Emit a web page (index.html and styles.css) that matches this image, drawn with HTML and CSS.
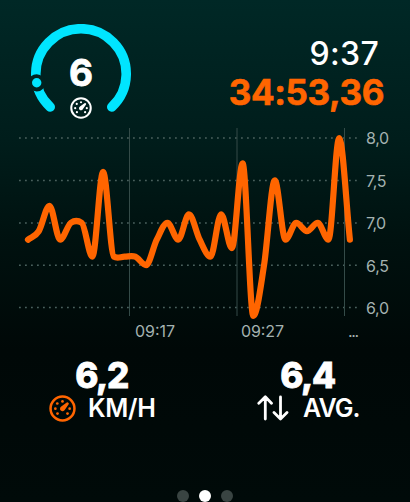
FILE: index.html
```html
<!DOCTYPE html>
<html lang="en">
  <head>
    <meta charset="UTF-8" />
    <meta name="viewport" content="width=device-width, initial-scale=1.0" />
    <title>Speed</title>
    <link rel="stylesheet" href="styles.css">
  </head>
  <body>
    <svg class="hidden">
      <symbol id="speedometer" viewBox="0 0 28 28">
        <circle cx="14" cy="14" r="12.4" fill="none" stroke="currentColor" stroke-width="2.6"></circle>
        <g fill="currentColor">
          <circle cx="14" cy="6.7" r="1.4"></circle>
          <circle cx="8.6" cy="8.8" r="1.4"></circle>
          <circle cx="6.6" cy="14.2" r="1.4"></circle>
          <circle cx="8.8" cy="19.3" r="1.4"></circle>
          <circle cx="19.2" cy="19.3" r="1.4"></circle>
          <circle cx="21.4" cy="14.2" r="1.4"></circle>
          <path d="M20 8q1 .6.4 1.6l-4.1 5.9a2.6 2.6 0 1 1-3.6-3.5l5.7-4.1q.9-.6 1.6.1z"></path>
        </g>
      </symbol>
    </svg>

    <header class="header">
      <div class="gauge">
        <svg class="gauge-ring" viewBox="0 0 100 100">
          <path class="gauge-track" d="M19.2 83a45.2 45.2 0 1 1 61.6 0"></path>
          <circle class="gauge-gap" cx="5.7" cy="58.8" r="8.6"></circle>
          <circle class="gauge-marker" cx="5.7" cy="58.8" r="4.7"></circle>
        </svg>
        <span class="gauge-value">6</span>
        <svg class="gauge-icon"><use href="#speedometer"></use></svg>
      </div>
      <div class="times">
        <div class="clock">9:37</div>
        <div class="elapsed">34:53,36</div>
      </div>
    </header>

    <svg class="chart" viewBox="0 124 410 222">
      <g class="grid-rows">
        <path d="M19 138h340M19 180.5h340M19 223h340M19 265.3h340M19 307.5h340"></path>
      </g>
      <path class="grid-columns" d="M129.5 128v188M237 128v188M344.5 128v188"></path>
      <path class="line"></path>
      <g class="label">
        <text x="366" y="144" textLength="23">8,0</text>
        <text x="366" y="186.5" textLength="20.5">7,5</text>
        <text x="366" y="228.5" textLength="20">7,0</text>
        <text x="366" y="271.5" textLength="23">6,5</text>
        <text x="366" y="313.5" textLength="23">6,0</text>
        <text x="135" y="337" textLength="40">09:17</text>
        <text x="241" y="337" textLength="43">09:27</text>
        <text x="348" y="337" textLength="11">...</text>
      </g>
    </svg>

    <main class="stats">
      <div class="stat">
        <div class="stat-value">6,2</div>
        <div class="stat-label">
          <svg class="stat-icon orange"><use href="#speedometer"></use></svg>
          <span class="unit">KM/H</span>
        </div>
      </div>
      <div class="stat">
        <div class="stat-value right">6,4</div>
        <div class="stat-label">
          <svg class="arrows" viewBox="0 0 32 26">
            <path d="M8.3 24V2M1.8 8.2L8.3 1.8l6.2 6.4M23.5 2v22M17 17.6l6.5 6.4 6.5-6.4"></path>
          </svg>
          <span class="unit average">AVG.</span>
        </div>
      </div>
    </main>

    <footer class="pages">
      <span class="page"></span>
      <span class="page active"></span>
      <span class="page"></span>
    </footer>
    <script src="chart.js"></script>
  </body>
</html>
```
FILE: styles.css
```css
*,
*::before,
*::after {
  box-sizing: border-box;
  margin: 0;
  padding: 0;
}

body {
  height: 502px;
  display: flex;
  flex-direction: column;
  overflow: hidden;
  background: linear-gradient(#002826 0, #001d1b 140px, #00110f 240px, #000807 350px, #000a09 502px);
  color: #fff;
  font-family: Inter, "Liberation Sans", sans-serif;
}

.hidden {
  display: none;
}

.header {
  display: flex;
  justify-content: space-between;
  height: 124px;
  padding: 24px 26px 0 31px;
}

.gauge {
  display: grid;
  width: 100px;
  height: 100px;
  justify-items: center;
}

.gauge > * {
  grid-area: 1 / 1;
}

.gauge-ring {
  width: 100px;
  height: 100px;
}

.gauge-track {
  fill: none;
  stroke: #00e5ff;
  stroke-width: 9.6;
  stroke-linecap: round;
}

.gauge-gap {
  fill: #002220;
}

.gauge-marker {
  fill: #00e5ff;
}

.gauge-value {
  padding-top: 29px;
  font-size: 37px;
  line-height: 40px;
  font-weight: 700;
  -webkit-text-stroke: 0.8px currentColor;
}

.gauge-icon {
  width: 22px;
  height: 22px;
  margin-top: 73px;
}

.times {
  padding-top: 11px;
  text-align: right;
}

.clock {
  padding-right: 5px;
  font-size: 32px;
  line-height: 37px;
  font-weight: 500;
  letter-spacing: 0.3px;
}

.elapsed {
  color: #ff6500;
  font-size: 35px;
  line-height: 41px;
  font-weight: 700;
  letter-spacing: -0.4px;
  -webkit-text-stroke: 0.6px currentColor;
}

.chart {
  flex: none;
  width: 410px;
  height: 222px;
}

.grid-rows {
  fill: none;
  stroke: #49605d;
  stroke-width: 1.6;
  stroke-dasharray: 1.8 4.2;
}

.grid-columns {
  stroke: #344b48;
  stroke-width: 1;
}

.line {
  fill: none;
  stroke: #ff6500;
  stroke-width: 6.2;
  stroke-linecap: round;
  stroke-linejoin: round;
}

.label {
  fill: #a4b2b0;
  font-size: 16px;
}

.stats {
  display: flex;
}

.stat {
  width: 205px;
  padding-top: 9px;
}

.stat-value {
  padding-right: 2px;
  text-align: center;
  font-size: 35px;
  line-height: 41px;
  font-weight: 800;
  letter-spacing: -1.4px;
  -webkit-text-stroke: 0.8px currentColor;
}

.right {
  padding-right: 0;
}

.stat-label {
  display: flex;
  align-items: center;
  height: 24px;
  padding-left: 49px;
  gap: 12px;
}

.stat-icon {
  width: 27px;
  height: 27px;
}

.orange {
  color: #ff6500;
}

.arrows {
  width: 32px;
  height: 26px;
  margin-left: 3px;
  fill: none;
  stroke: currentColor;
  stroke-width: 2.8;
  stroke-linecap: round;
  stroke-linejoin: round;
}

.unit {
  font-size: 25px;
  line-height: 28px;
  font-weight: 600;
  letter-spacing: -0.3px;
}

.average {
  margin-left: 2px;
  letter-spacing: -0.9px;
}

.pages {
  display: flex;
  justify-content: center;
  gap: 10px;
  margin-top: auto;
}

.page {
  width: 12px;
  height: 12px;
  border-radius: 50%;
  background: #394442;
}

.active {
  background: #fff;
}
```
FILE: chart.js
```js
const speeds = [
  6.8, 6.9, 7.2, 6.8, 7.0, 7.0, 6.6, 7.6, 6.6, 6.6, 6.6, 6.5, 6.8, 7.0, 6.8, 7.1,
  6.8, 6.6, 7.1, 6.7, 7.7, 5.9, 6.5, 7.5, 6.8, 7.0, 6.9, 7.0, 6.8, 8.0, 6.8
];
const step = 10.73;
const xs = speeds.map((speed, i) => 28 + i * step);
const ys = speeds.map((speed) => 138 + (8 - speed) * 84.75);

// Flat at each peak, and limited elsewhere so the tall peaks do not overshoot.
const slope = (i) => {
  if (i === 0) return ys[1] - ys[0];
  if (i === ys.length - 1) return ys[i] - ys[i - 1];
  const before = ys[i] - ys[i - 1];
  const after = ys[i + 1] - ys[i];
  if (before * after < 0) return 0;
  const mean = (before + after) / 2;
  const limit = 3 * Math.min(Math.abs(before), Math.abs(after)) + 7;
  return Math.sign(mean) * Math.min(Math.abs(mean), limit);
};

let d = `M${xs[0]} ${ys[0]}`;
for (let i = 0; i < ys.length - 1; i++) {
  const third = step / 3;
  d += `C${xs[i] + third} ${ys[i] + slope(i) / 3}`;
  d += ` ${xs[i + 1] - third} ${ys[i + 1] - slope(i + 1) / 3}`;
  d += ` ${xs[i + 1]} ${ys[i + 1]}`;
}
document.querySelector('.line').setAttribute('d', d);
```
